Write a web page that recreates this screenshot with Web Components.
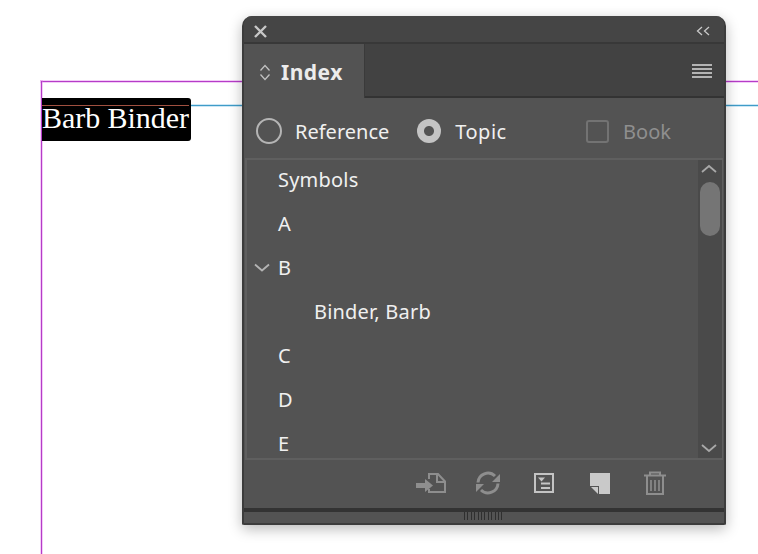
<!DOCTYPE html>
<html>
<head>
<meta charset="utf-8">
<title>Index panel</title>
<style>
  html, body { margin: 0; height: 100%; background: #fff; overflow: hidden; }
  body { font-family: "Noto Sans", sans-serif; }
</style>
</head>
<body>
<doc-canvas>
  <index-panel>
    <index-row>Symbols</index-row>
    <index-row>A</index-row>
    <index-row open>B</index-row>
    <index-row child>Binder, Barb</index-row>
    <index-row>C</index-row>
    <index-row>D</index-row>
    <index-row>E</index-row>
  </index-panel>
</doc-canvas>

<script>
class DocCanvas extends HTMLElement {
  constructor() {
    super();
    this.attachShadow({ mode: 'open' });
    this.shadowRoot.innerHTML = `
      <style>
        :host { display: block; position: relative; width: 758px; height: 554px; overflow: hidden; background: #fff; }
        .margin-top, .margin-left { position: absolute; background: #b53cc8; box-shadow: 0 0 0 1px rgba(225,130,235,.4); }
        .margin-top { left: 41px; right: 0; top: 81px; height: 1px; }
        .margin-left { left: 41px; top: 81px; bottom: 0; width: 1px; }
        .guide { position: absolute; left: 190px; right: 0; top: 105px; height: 1px; background: #3f9cc8; box-shadow: 0 0 0 1px rgba(130,195,230,.4); }
        .frame {
          position: absolute; left: 42px; top: 98px; width: 149px; height: 43px;
          background: #000; border-radius: 0 3px 3px 0; color: #fff;
          font: 30px/41px "Liberation Serif", serif; white-space: nowrap;
        }
        .frame::before { content: ''; position: absolute; left: 0; right: 2px; top: 7px; height: 1px; background: #a05040; }
        .frame span { position: absolute; left: 0; top: -1px; letter-spacing: -0.05px; }
        ::slotted(index-panel) { position: absolute; left: 242px; top: 16px; }
      </style>
      <div class="margin-top"></div>
      <div class="margin-left"></div>
      <div class="guide"></div>
      <div class="frame"><span>Barb Binder</span></div>
      <slot></slot>
    `;
  }
}

class IndexRow extends HTMLElement {
  constructor() {
    super();
    this.attachShadow({ mode: 'open' });
    this.shadowRoot.innerHTML = `
      <style>
        :host { display: flex; align-items: center; height: 44px; padding-left: 31px; position: relative;
                font-size: 20px; color: #f0f0f0; white-space: nowrap; letter-spacing: 0.2px; }
        :host([child]) { padding-left: 67px; }
        svg { position: absolute; left: 7px; top: 18px; display: none; }
        :host([open]) svg { display: block; }
      </style>
      <svg width="16" height="9" viewBox="0 0 16 9" fill="none" stroke="#b4b4b4" stroke-width="1.8"><path d="M1 1.500l7 6 7-6"/></svg>
      <slot></slot>
    `;
  }
}

class IndexPanel extends HTMLElement {
  constructor() {
    super();
    this.attachShadow({ mode: 'open' });
    this.shadowRoot.innerHTML = `
      <style>
        :host {
          display: flex; flex-direction: column; box-sizing: border-box; width: 484px; height: 509px;
          background: #535353; border: solid #3c3c3c; border-width: 0 2px 2px 2px; border-radius: 10px 10px 2px 2px;
          box-shadow: 0 4px 14px rgba(0,0,0,.28); overflow: hidden; color: #f0f0f0;
        }
        .title { flex: none; box-sizing: border-box; height: 28px; background: #454545; border-bottom: 2px solid #383838; display: flex; align-items: center; justify-content: space-between; padding: 4px 14px 0 9px; }
        .tabs { flex: none; box-sizing: border-box; height: 54px; display: flex; background: #424242; border-bottom: 2px solid #333; }
        .tab { width: 121px; height: 54px; box-sizing: border-box; background: #535353; border-right: 1px solid #3a3a3a; display: flex; align-items: center; padding: 2px 0 0 15px; gap: 10px; font-size: 21px; font-weight: 700; letter-spacing: .5px; color: #ececec; }
        .tabs .menu { margin: 20px 12px 0 auto; }
        .options { flex: none; box-sizing: border-box; height: 60px; display: flex; align-items: center; font-size: 20px; padding: 6px 0 0 12px; }
        .radio { width: 22px; height: 22px; border: 2px solid #b5b5b5; border-radius: 50%; margin-right: 13px; flex: none; }
        .radio.on { width: 24px; height: 24px; border: 0; margin: 0 14px 0 28px; background: radial-gradient(circle, #535353 0 4.500px, #c4c4c4 5.500px); }
        .topic { letter-spacing: .5px; }
        .book { margin-left: auto; margin-right: 53px; display: flex; align-items: center; color: #8f8f8f; }
        .check { width: 19px; height: 19px; border: 2px solid #737373; border-radius: 3px; margin-right: 14px; }
        .list { flex: none; box-sizing: border-box; height: 302px; margin: 0 1px; border: solid #5f5f5f; border-width: 2px 1px 2px 2px; display: flex; overflow: hidden; }
        .rows { flex: 1; margin-top: -3px; overflow: hidden; }
        .scroll { flex: none; width: 24px; background: #4a4a4a; position: relative; }
        .thumb { position: absolute; left: 2px; top: 22px; width: 20px; height: 54px; background: #757575; border-radius: 10px; }
        .scroll svg { position: absolute; left: 3px; }
        .foot { flex: 1; display: flex; align-items: center; padding: 0 0 2px 172px; }
        .foot svg { display: block; flex: none; }
        .bar { flex: none; height: 4px; background: #333; }
        .grip { flex: none; height: 11px; display: flex; justify-content: center; }
        .grip i { width: 38px; margin-left: -2px; height: 8px; background: repeating-linear-gradient(90deg, #2f2f2f 0 1px, transparent 1px 3.400px); }
      </style>
      <div class="title">
        <svg width="15" height="15" viewBox="0 0 15 15" stroke="#c8c8c8" stroke-width="2.400"><path d="M2 2l11 11M13 2L2 13"/></svg>
        <svg width="14" height="10" viewBox="0 0 14 10" fill="none" stroke="#c8c8c8" stroke-width="1.300"><path d="M6 1L1.500 5 6 9M13 1L8.500 5 13 9"/></svg>
      </div>
      <div class="tabs">
        <div class="tab">
          <svg width="12" height="17" viewBox="0 0 12 17" fill="none" stroke="#c0c0c0" stroke-width="1.300"><path d="M1.500 6.500L6 1.500l4.500 5M1.500 10.500L6 15.500l4.500-5"/></svg>
          <span>Index</span>
        </div>
        <svg class="menu" width="20" height="15" viewBox="0 0 20 15" fill="#b4b4b4"><rect width="20" height="2"/><rect y="4" width="20" height="2"/><rect y="8" width="20" height="2"/><rect y="12" width="20" height="2"/></svg>
      </div>
      <div class="options">
        <div class="radio"></div><span>Reference</span>
        <div class="radio on"></div><span class="topic">Topic</span>
        <div class="book"><div class="check"></div><span>Book</span></div>
      </div>
      <div class="list">
        <div class="rows"><slot></slot></div>
        <div class="scroll">
          <svg style="top:4px" width="16" height="10" viewBox="0 0 16 10" fill="none" stroke="#a8a8a8" stroke-width="1.800"><path d="M1 8l7-6 7 6"/></svg>
          <div class="thumb"></div>
          <svg style="bottom:5px" width="16" height="10" viewBox="0 0 16 10" fill="none" stroke="#a8a8a8" stroke-width="1.800"><path d="M1 2l7 6 7-6"/></svg>
        </div>
      </div>
      <div class="foot">
        <svg width="30" height="20" viewBox="0 0 30 20" fill="none" stroke="#8e8e8e" stroke-width="2"><path d="M13 6V1h9l7 7.500V19H13v-3"/><path d="M21 1v8h8"/><path d="M0 12.500h10" stroke-width="5"/><path d="M9 6l8 6.500-8 6.500z" fill="#8e8e8e" stroke="none"/></svg>
        <svg style="margin-left:30px" width="24" height="24" viewBox="0 0 24 24" fill="none" stroke="#8e8e8e" stroke-width="3"><path d="M2 11.500A10 10 0 0 1 19 5"/><path d="M22 12.500A10 10 0 0 1 5 19"/><path d="M24 3v8h-8z" fill="#8e8e8e" stroke="none"/><path d="M0 21v-8h8z" fill="#8e8e8e" stroke="none"/></svg>
        <svg style="margin-left:34px" width="20" height="20" viewBox="0 0 20 20" fill="none" stroke="#c4c4c4" stroke-width="2"><rect x="1" y="1" width="18" height="18"/><path d="M4 4.500h7l-3.500 4z" fill="#c4c4c4" stroke="none"/><path d="M7 10.500h9M7 15h9" stroke-width="2"/></svg>
        <svg style="margin-left:36px" width="20" height="21" viewBox="0 0 20 21" fill="#c9c9c9"><path d="M0 0h20v21H9v-8H0z"/><path d="M1 14h7v7z"/></svg>
        <svg style="margin-left:34px" width="22" height="24" viewBox="0 0 22 24" fill="none" stroke="#8e8e8e" stroke-width="2"><path d="M0 4.500h22M6 4V1.500h10V4"/><path d="M3 5v18h16V5"/><path d="M7 9v11M11 9v11M15 9v11" stroke-width="1.600"/></svg>
      </div>
      <div class="bar"></div>
      <div class="grip"><i></i></div>
    `;
  }
}

customElements.define('doc-canvas', DocCanvas);
customElements.define('index-row', IndexRow);
customElements.define('index-panel', IndexPanel);
</script>
</body>
</html>
